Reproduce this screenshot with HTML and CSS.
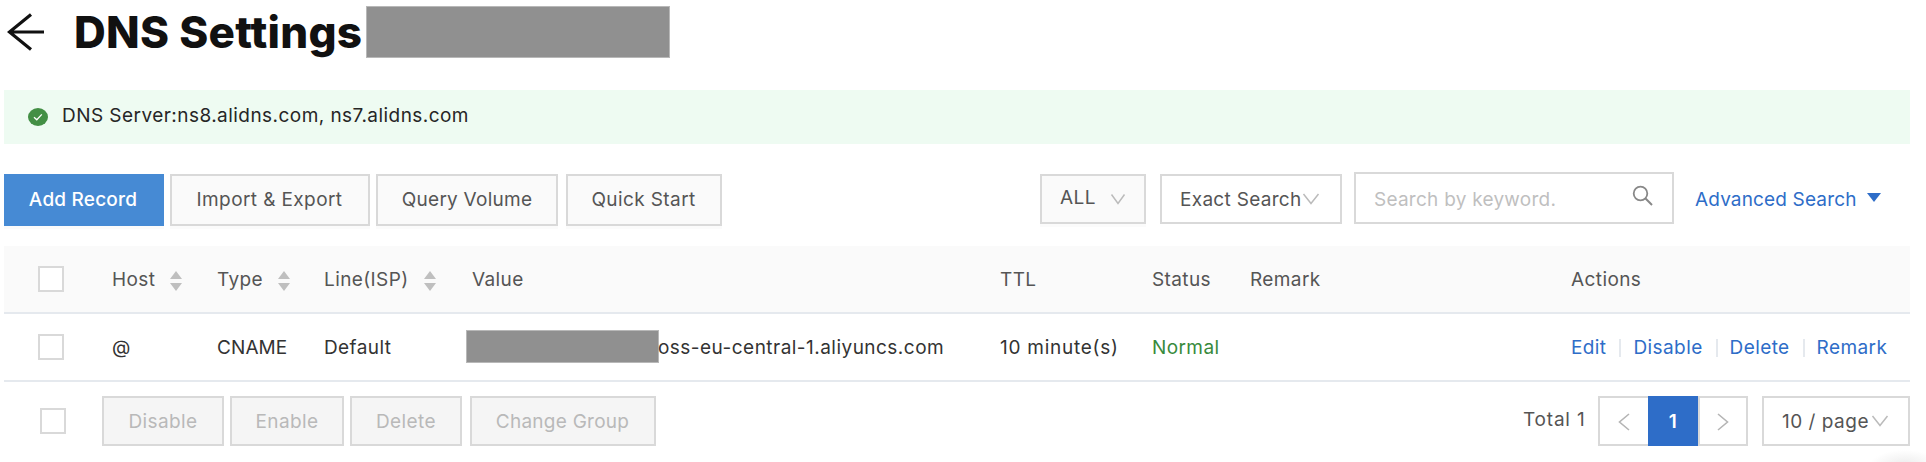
FILE: index.html
```html
<!DOCTYPE html>
<html lang="en">
<head>
<meta charset="utf-8">
<title>DNS Settings</title>
<link rel="stylesheet" href="styles.css">
</head>
<body>
<main class="page">
  <header class="header">
    <svg class="back" width="38" height="38" viewBox="0 0 38 38"><path d="M24 1.500L2.500 19L24 36.500M2.500 19H37" fill="none" stroke="#111" stroke-width="3.200"/></svg>
    <h1 class="title">DNS Settings</h1>
    <span class="mask mask-title"></span>
  </header>

  <section class="notice">
    <svg class="notice-icon" width="20" height="18" viewBox="0 0 20 18"><ellipse cx="10" cy="9" rx="10" ry="9" fill="#438f45"/><path d="M6 9.200l2.800 2.600L13.800 6.400" fill="none" stroke="#fff" stroke-width="1.300"/></svg>
    <span class="notice-text">DNS Server:ns8.alidns.com, ns7.alidns.com</span>
  </section>

  <section class="toolbar">
    <button class="btn primary w-add">Add Record</button>
    <button class="btn w-import">Import &amp; Export</button>
    <button class="btn w-query">Query Volume</button>
    <button class="btn w-quick">Quick Start</button>
    <div class="filters">
      <div class="select all"><span>ALL</span><svg width="16" height="12" viewBox="0 0 16 12"><path d="M1.500 1.500L8 10.500L14.500 1.500" fill="none" stroke="#bbb" stroke-width="1.500"/></svg></div>
      <div class="select exact"><span>Exact Search</span><svg width="18" height="12" viewBox="0 0 18 12"><path d="M1.500 1L9 10.500L16.500 1" fill="none" stroke="#bbb" stroke-width="1.500"/></svg></div>
      <div class="search"><span>Search by keyword.</span><svg width="22" height="22" viewBox="0 0 22 22"><circle cx="8.500" cy="8.500" r="6.800" fill="none" stroke="#888" stroke-width="1.800"/><path d="M13.300 13.300L20 20" stroke="#888" stroke-width="2"/></svg></div>
      <a class="advanced"><span>Advanced Search</span><svg width="14" height="9" viewBox="0 0 14 9"><path d="M0 0H14L7 9Z" fill="#2e6dc8"/></svg></a>
    </div>
  </section>

  <section class="table">
    <div class="row head">
      <i class="check"></i>
      <span class="sortable">Host<svg width="12" height="20" viewBox="0 0 12 20"><path d="M0 8L6 0L12 8ZM0 12H12L6 20Z"/></svg></span>
      <span class="sortable">Type<svg width="12" height="20" viewBox="0 0 12 20"><path d="M0 8L6 0L12 8ZM0 12H12L6 20Z"/></svg></span>
      <span class="sortable">Line(ISP)<svg width="12" height="20" viewBox="0 0 12 20"><path d="M0 8L6 0L12 8ZM0 12H12L6 20Z"/></svg></span>
      <span>Value</span>
      <span>TTL</span>
      <span>Status</span>
      <span>Remark</span>
      <span>Actions</span>
    </div>
    <div class="row">
      <i class="check"></i>
      <span>@</span>
      <span class="type">CNAME</span>
      <span>Default</span>
      <span class="value"><i class="mask mask-value"></i><span>oss-eu-central-1.aliyuncs.com</span></span>
      <span class="ttl">10 minute(s)</span>
      <span class="normal">Normal</span>
      <span></span>
      <span class="actions"><a>Edit</a><a>Disable</a><a>Delete</a><a>Remark</a></span>
    </div>
  </section>

  <footer class="footer">
    <i class="check"></i>
    <button class="btn off w-disable">Disable</button>
    <button class="btn off w-enable">Enable</button>
    <button class="btn off w-delete">Delete</button>
    <button class="btn off w-group">Change Group</button>
    <div class="pager">
      <span class="total">Total 1</span>
      <span class="pg prev"><svg width="12" height="18" viewBox="0 0 12 18"><path d="M11 1L1.500 9L11 17" fill="none" stroke="#b5b5b5" stroke-width="1.600"/></svg></span>
      <span class="pg current">1</span>
      <span class="pg next"><svg width="12" height="18" viewBox="0 0 12 18"><path d="M1 1L10.500 9L1 17" fill="none" stroke="#b5b5b5" stroke-width="1.600"/></svg></span>
      <div class="select size"><span>10 / page</span><svg width="18" height="12" viewBox="0 0 18 12"><path d="M1.500 1L9 10.500L16.500 1" fill="none" stroke="#bbb" stroke-width="1.500"/></svg></div>
    </div>
  </footer>
</main>
<div class="corner-shadow"></div>
</body>
</html>
```
FILE: styles.css
```css
* { box-sizing: border-box; }
body {
  margin: 0;
  height: 462px;
  overflow: hidden;
  background: #fff;
  color: #333;
  font: 400 19px/26px Inter, "Liberation Sans", sans-serif;
  letter-spacing: 0.4px;
  white-space: nowrap;
}
.page { width: 1926px; padding: 0 16px 0 4px; }
.header { display: flex; height: 90px; padding: 6px 0 0 3px; align-items: flex-start; }
.back { margin-top: 7px; }
.title { width: 292px; margin: 0 0 0 29px; color: #111; font-size: 44px; line-height: 52px; font-weight: 800; letter-spacing: 0.25px; }
.mask { display: block; background: #909090; border: 1px solid #b8b8b8; }
.mask-title { width: 304px; height: 52px; }
.notice { display: flex; align-items: center; height: 54px; padding: 0 24px; background: #eefbf2; color: #262626; }
.notice-text { margin: -2px 0 0 14px; letter-spacing: 0.45px; }
.toolbar { display: flex; height: 72px; margin-top: 30px; }
.btn {
  height: 52px; padding: 0; flex: none;
  border: 2px solid #d9d9d9; background: #fafafa; color: #555;
  font: inherit; letter-spacing: inherit; text-align: center;
  box-shadow: 0 3px 0 #fbfbfb;
}
.primary { border-color: #468ad4; background: #468ad4; color: #fff; font-weight: 500; letter-spacing: 0.2px; padding-right: 2px; }
.w-add { width: 160px; }
.w-import { width: 200px; margin-left: 6px; padding-right: 1px; }
.w-query { width: 182px; margin-left: 6px; letter-spacing: 0.25px; }
.w-quick { width: 156px; margin-left: 8px; letter-spacing: 0.4px; padding-right: 1px; }
.filters { display: flex; margin-left: auto; }
.select { display: flex; align-items: center; height: 50px; border: 2px solid #d9d9d9; color: #555; padding-left: 18px; }
.select span { padding-top: 1px; }
.all { width: 106px; background: #fafafa; box-shadow: 0 3px 0 #fbfbfb; }
.all span { margin-top: -4px; width: 50px; }
.exact { width: 182px; margin-left: 14px; }
.exact span { width: 122px; letter-spacing: 0.3px; }
.search { display: flex; align-items: center; justify-content: space-between; width: 320px; height: 52px; margin: -2px 0 0 12px; padding: 0 18px; border: 2px solid #d9d9d9; color: #bfbfbf; letter-spacing: 0.25px; }
.search span { padding-top: 3px; }
.search svg { margin-top: -5px; }
.advanced { display: flex; align-items: center; height: 50px; margin: 0 29px 0 21px; color: #2e6dc8; letter-spacing: 0.15px; }
.advanced span { width: 172px; padding-top: 2px; }
.advanced svg { margin-top: -3px; }
.row {
  display: grid; align-items: center;
  grid-template-columns: 108px 105px 107px 148px 528px 152px 98px 321px auto;
  height: 68px; border-bottom: 2px solid #e5e9ee;
}
.row > span:not(.value) { padding-top: 2px; }
.head { background: #fafafa; color: #555; }
.check { display: block; width: 26px; height: 26px; border: 2px solid #d9d9d9; background: #fff; }
.row .check { margin-left: 34px; }
.sortable { display: flex; align-items: center; gap: 15px; }
.sortable svg { margin-top: 1px; fill: #bfbfbf; }
.type { letter-spacing: 0.1px; }
.value { display: flex; align-items: center; margin: -2px 0 0 -6px; }
.value span { margin-left: -1px; padding-top: 3px; letter-spacing: 0.47px; }
.mask-value { width: 193px; height: 33px; flex: none; }
.ttl { letter-spacing: 0.75px; }
.normal { color: #388a3c; }
.actions { display: flex; align-items: center; color: #2e6dc8; }
.actions a + a { display: flex; align-items: center; }
.actions a + a::before { content: ""; width: 2px; height: 18px; margin: 0 12px 0 13px; background: #e5e9ee; }
.footer { display: flex; padding-top: 14px; }
.footer .check { margin: 12px 36px 0; }
.off { height: 50px; padding-top: 1px; background: #f5f5f5; color: #b9b9b9; box-shadow: none; }
.w-disable { width: 122px; }
.w-enable { width: 114px; margin-left: 6px; }
.w-delete { width: 112px; margin-left: 6px; }
.w-group { width: 186px; margin-left: 8px; letter-spacing: 0.25px; padding-right: 1px; }
.pager { display: flex; margin-left: auto; color: #555; }
.total { width: 75px; margin-top: 11px; letter-spacing: 0.8px; }
.pg { display: flex; align-items: center; justify-content: center; width: 50px; height: 50px; border: 2px solid #d9d9d9; }
.prev { border-right: 0; }
.pg svg { margin-top: 2px; }
.current { border-color: #2e6dc8; background: #2e6dc8; color: #fff; font-weight: 600; padding-top: 1px; }
.size { width: 148px; margin-left: 14px; }
.size span { width: 89px; letter-spacing: 0.5px; }
.corner-shadow { position: absolute; left: 1870px; top: 450px; width: 70px; height: 30px; background: radial-gradient(closest-side, #ececec, #fff0); }
```
